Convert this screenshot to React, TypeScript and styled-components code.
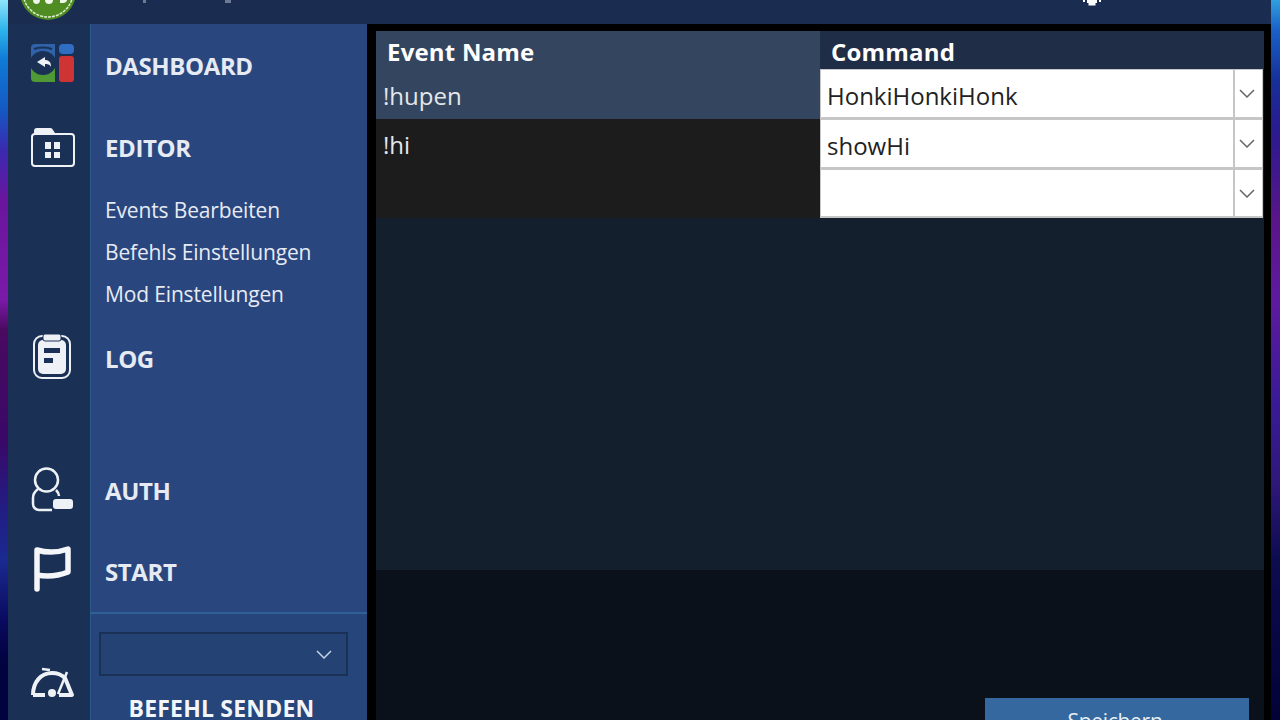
import React from "react"
import styled, { createGlobalStyle } from "styled-components"

const Global = createGlobalStyle`
  html, body {
    margin: 0;
    height: 100%;
    overflow: hidden;
    background: #000;
  }
  * {
    box-sizing: border-box;
  }
`

const Desktop = styled.div`
  width: 1280px;
  height: 720px;
  overflow: hidden;
  padding: 0 9px 0 8px;
  font-family: "Open Sans", "Noto Sans", sans-serif;
  background:
    linear-gradient(180deg, #8fe4fb 0, #2db4ea 30px, #0f7ad6 60px, #1458c4 110px, #3a2ab0 150px, #6a159e 200px, #7a1aa8 300px, #4a0a60 330px, #3a0868 440px, #241a80 500px, #1a2a90 560px, #0a0a60 620px, #020240 660px) left top / 8px 100% no-repeat,
    linear-gradient(180deg, #30a0e0 0, #1a60c8 30px, #16309a 80px, #2a1a90 130px, #5a158a 220px, #5e1aa0 300px, #3a1a98 400px, #30187c 480px, #0c0c50 560px, #020238 720px) right top / 9px 100% no-repeat;
`

const Window = styled.div`
  height: 100%;
  display: flex;
  flex-direction: column;
  background: #000;
`

const TitleBar = styled.header`
  height: 24px;
  flex: none;
  display: flex;
  background: #1a2d50;
  padding-left: 12px;
`

const Logo = styled.svg`
  width: 56px;
  height: 20px;
  flex: none;
  display: block;
`

const TitleTick = styled.div<{ $gap: number; $width: number }>`
  width: ${(p) => p.$width}px;
  height: 3px;
  flex: none;
  margin-left: ${(p) => p.$gap}px;
  background: #6d7b92;
`

const TrayIcon = styled.svg`
  width: 24px;
  height: 6px;
  display: block;
  margin-left: auto;
  margin-right: 167px;
`

const Body = styled.div`
  flex: 1;
  min-height: 0;
  display: flex;
`

const Rail = styled.nav`
  width: 83px;
  flex: none;
  display: flex;
  flex-direction: column;
  align-items: center;
  background: #1a3055;
  border-right: 1px solid #2d5a8c;
`

const RailIcon = styled.svg<{ $top: number }>`
  width: 48px;
  height: 48px;
  flex: none;
  display: block;
  margin-top: ${(p) => p.$top}px;
  margin-left: 6px;
`

const Sidebar = styled.aside`
  width: 276px;
  flex: none;
  display: flex;
  flex-direction: column;
  background: #2a467e;
`

const Menu = styled.div`
  height: 588px;
  flex: none;
  padding-left: 14px;
  color: #e6ebf3;
`

const Heading = styled.div<{ $height: number; $gap?: number }>`
  height: ${(p) => p.$height}px;
  margin-top: ${(p) => p.$gap ?? 0}px;
  display: flex;
  align-items: center;
  font-size: 24px;
  font-weight: 700;
  letter-spacing: -0.4px;
`

const SubItem = styled.div`
  height: 42px;
  display: flex;
  align-items: center;
  font-size: 21px;
  letter-spacing: -0.15px;
`

const SendBox = styled.div`
  flex: 1;
  border-top: 2px solid #2f6199;
  background: #26457b;
  padding: 18px 19px 0 8px;
`

const SendSelect = styled.div`
  height: 44px;
  display: flex;
  align-items: center;
  justify-content: flex-end;
  padding-right: 14px;
  border: 2px solid #1a3055;
  background: #244273;
`

const SendLabel = styled.div`
  margin: 16px 4px 0 0;
  text-align: center;
  color: #f2f5f9;
  font-size: 23px;
  line-height: 32px;
  font-weight: 700;
  letter-spacing: 0.2px;
`

const Main = styled.main`
  flex: 1;
  min-width: 0;
  display: flex;
  flex-direction: column;
  margin: 7px 7px 0 9px;
  background: #0a111b;
`

const TablePanel = styled.section`
  height: 539px;
  flex: none;
  background: #141f2e;
`

const Table = styled.div`
  display: grid;
  grid-template-columns: 444px 1fr;
  grid-template-rows: 38px 50px 50px 49px;
`

const HeaderCell = styled.div<{ $active?: boolean }>`
  display: flex;
  align-items: center;
  padding: 3px 0 0 11px;
  color: #fff;
  font-size: 24px;
  font-weight: 700;
  letter-spacing: 0.2px;
  background: ${(p) => (p.$active ? "#34465f" : "#1f2d46")};
`

const NameCell = styled.div<{ $active?: boolean; $span?: number }>`
  grid-row: span ${(p) => p.$span ?? 1};
  padding: ${(p) => (p.$active ? "10px" : "9px")} 0 0 7px;
  color: #e4e7ea;
  font-size: 24px;
  line-height: 34px;
  background: ${(p) => (p.$active ? "#34465f" : "#1c1c1c")};
`

const SelectCell = styled.div`
  display: flex;
  margin-right: 1px;
  background: #fff;
  border: 2px solid #c6c6c6;
  border-top-width: 1px;
  border-right-width: 1px;
  border-left-width: 1px;
  color: #222;
`

const SelectText = styled.div`
  flex: 1;
  min-width: 0;
  display: flex;
  align-items: center;
  padding: 3px 0 0 6px;
  font-size: 24px;
`

const SelectArrow = styled.div`
  width: 29px;
  flex: none;
  display: flex;
  align-items: center;
  justify-content: center;
  padding-right: 3px;
  border-left: 2px solid #c6c6c6;
`

const Actions = styled.div`
  flex: 1;
  display: flex;
  justify-content: flex-end;
  align-items: flex-start;
  padding: 128px 15px 0 0;
`

const SaveButton = styled.button`
  width: 264px;
  height: 40px;
  padding: 5px 4px 0 0;
  display: block;
  border: 0;
  background: #35689e;
  color: #e6eef6;
  font-family: inherit;
  font-size: 21px;
  line-height: 28px;
  letter-spacing: -0.3px;
  text-align: center;
`

function Chevron({ color }: { color: string }) {
  return (
    <svg width="16" height="9" viewBox="0 0 16 9" fill="none">
      <path d="M1 1l7 7 7-7" stroke={color} strokeWidth="1.5" />
    </svg>
  )
}

function App() {
  return (
    <Desktop>
      <Global />
      <Window>
        <TitleBar>
          <Logo viewBox="0 0 56 20">
            <circle cx="28" cy="-8" r="28" fill="#4f8c22" />
            <circle cx="28" cy="-8" r="25" fill="none" stroke="#dfeccf" strokeWidth="1.5" strokeDasharray="3 1" />
            <path d="M13 0h7c0 3-2 4-3.500 4S13 3 13 0zM25 0h8c0 3-2 4-4 4s-4-1-4-4zM40 0h7c0 2-2 3-4 3h-3z" fill="#f2f6ea" />
          </Logo>
          <TitleTick $gap={67} $width={3} />
          <TitleTick $gap={79} $width={6} />
          <TrayIcon viewBox="0 0 24 6">
            <path d="M7 0h10v3h-1.500v2.500h-7V3H7zM3 0h2v2H3zM19 0h2v2h-2z" fill="#fff" />
          </TrayIcon>
        </TitleBar>
        <Body>
          <Rail>
            <RailIcon $top={14} viewBox="0 0 48 48">
              <path d="M3 10a4 4 0 0 1 4-4h20v16H3z" fill="#2f62a8" />
              <path d="M3 30h24v14H7a4 4 0 0 1-4-4z" fill="#4f9a35" />
              <ellipse cx="15" cy="25" rx="13" ry="12" fill="#1a3055" />
              <path d="M3 20h24v10H3z" fill="#1a3055" />
              <path d="M6 11c5-2 13-2 18 0" stroke="#1a3055" strokeWidth="2" fill="none" />
              <path d="M17 19l-8 5 8 5v-3c4 0 5 1 6 3 0-5-2-7-6-7z" fill="#eef2f6" />
              <rect x="31" y="6" width="15" height="10" rx="4" fill="#2f6ec2" />
              <rect x="31" y="18" width="15" height="26" rx="3" fill="#cf3434" />
            </RailIcon>
            <RailIcon $top={38} viewBox="0 0 48 48">
              <rect x="4" y="10" width="42" height="32" rx="3" fill="none" stroke="#eef2f7" strokeWidth="2" />
              <path d="M6 9V7a3 3 0 0 1 3-3h13a3 3 0 0 1 3 2l2 3z" fill="#eef2f7" />
              <path d="M17 18h6v7h-6zM26 18h6v7h-6zM17 28h6v6h-6zM26 28h6v6h-6z" fill="#eef2f7" />
            </RailIcon>
            <RailIcon $top={159} viewBox="0 0 48 48">
              <rect x="6" y="5" width="36" height="42" rx="8" fill="none" stroke="#eef2f7" strokeWidth="2" />
              <rect x="10" y="9" width="28" height="34" rx="5" fill="#eef2f7" />
              <rect x="15" y="3" width="18" height="7" rx="2" fill="#eef2f7" stroke="#1a3055" strokeWidth="1" />
              <rect x="16" y="17" width="16" height="5" fill="#1a3055" />
              <rect x="16" y="27" width="9" height="5" fill="#1a3055" />
            </RailIcon>
            <RailIcon $top={86} viewBox="0 0 48 48">
              <circle cx="18.500" cy="15" r="11.500" fill="none" stroke="#eef2f7" strokeWidth="2.500" />
              <path d="M10 24c-4 3-5 5-5 9v6a6 6 0 0 0 6 6h13M28 25c2 2 3 3 3 6" fill="none" stroke="#eef2f7" strokeWidth="2.500" />
              <rect x="25" y="34" width="20" height="10" rx="3" fill="#eef2f7" />
            </RailIcon>
            <RailIcon $top={31} viewBox="0 0 48 48">
              <path d="M9 45V6c10 3 20 3 31-1v23c-10 4-20 5-31 3" fill="none" stroke="#f4f6fa" strokeWidth="5.500" strokeLinecap="round" strokeLinejoin="round" />
            </RailIcon>
            <RailIcon $top={60} viewBox="0 0 48 48">
              <path d="M5 43C5 30 13 21 24 21c6 0 10 2 13 5l7 17H31M17 43H5" fill="none" stroke="#eef2f7" strokeWidth="4" strokeLinejoin="round" />
              <path d="M14 17l8 1M39 20l-9 22" fill="none" stroke="#eef2f7" strokeWidth="2.500" />
              <circle cx="24" cy="41" r="4" fill="#eef2f7" />
            </RailIcon>
          </Rail>
          <Sidebar>
            <Menu>
              <Heading $height={82}>DASHBOARD</Heading>
              <Heading $height={83}>EDITOR</Heading>
              <SubItem>Events Bearbeiten</SubItem>
              <SubItem>Befehls Einstellungen</SubItem>
              <SubItem>Mod Einstellungen</SubItem>
              <Heading $height={86}>LOG</Heading>
              <Heading $height={80} $gap={49}>AUTH</Heading>
              <Heading $height={82}>START</Heading>
            </Menu>
            <SendBox>
              <SendSelect>
                <Chevron color="#c4d2e4" />
              </SendSelect>
              <SendLabel>BEFEHL SENDEN</SendLabel>
            </SendBox>
          </Sidebar>
          <Main>
            <TablePanel>
              <Table>
                <HeaderCell $active>Event Name</HeaderCell>
                <HeaderCell>Command</HeaderCell>
                <NameCell $active>!hupen</NameCell>
                <SelectCell>
                  <SelectText>HonkiHonkiHonk</SelectText>
                  <SelectArrow>
                    <Chevron color="#666" />
                  </SelectArrow>
                </SelectCell>
                <NameCell $span={2}>!hi</NameCell>
                <SelectCell>
                  <SelectText>showHi</SelectText>
                  <SelectArrow>
                    <Chevron color="#666" />
                  </SelectArrow>
                </SelectCell>
                <SelectCell>
                  <SelectText />
                  <SelectArrow>
                    <Chevron color="#666" />
                  </SelectArrow>
                </SelectCell>
              </Table>
            </TablePanel>
            <Actions>
              <SaveButton>Speichern</SaveButton>
            </Actions>
          </Main>
        </Body>
      </Window>
    </Desktop>
  )
}

export default App
